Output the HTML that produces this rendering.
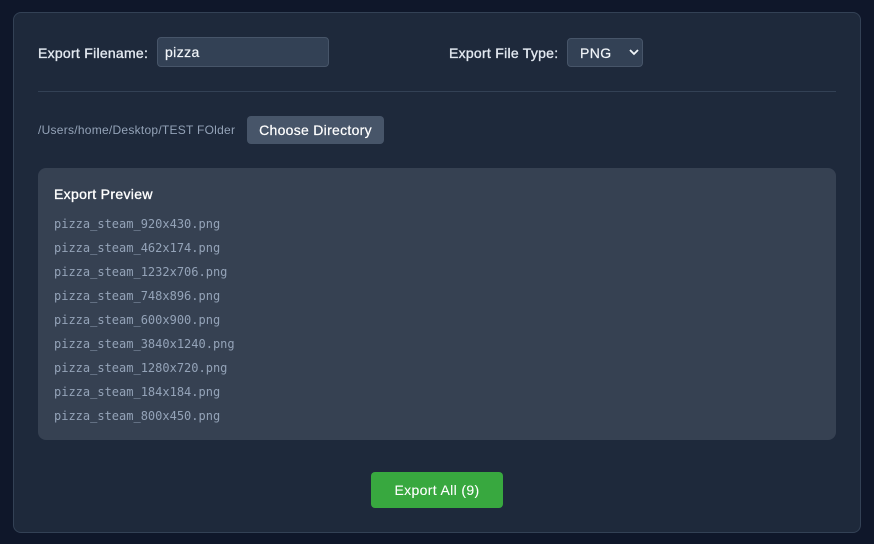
<!DOCTYPE html>
<html lang="en">
<head>
<meta charset="utf-8">
<title>Export</title>
<style>
html,body{margin:0;padding:0;width:874px;height:544px;overflow:hidden;background:#0f172a;}
body{position:relative;font-family:"Liberation Sans",sans-serif;}
.abs{position:absolute;box-sizing:border-box;white-space:nowrap;}
.card{left:13px;top:12px;width:848px;height:521px;background:#1e293b;border:1px solid #334155;border-radius:8px;}
.lbl{font-size:14px;line-height:18px;color:#e2e8f0;-webkit-text-stroke:.35px #e2e8f0;letter-spacing:.27px;}
.input{left:157px;top:37px;width:172px;height:30px;background:#334155;border:1px solid #475569;border-radius:4px;}
.select{left:567px;top:38px;width:76px;height:29px;background:#334155;border:1px solid #475569;border-radius:4px;}
.val{font-size:14px;line-height:18px;color:#f1f5f9;letter-spacing:.4px;-webkit-text-stroke:.2px #f1f5f9;}
.rule{left:38px;top:91px;width:798px;height:1px;background:#334155;}
.path{left:38px;top:122px;font-size:12px;line-height:16px;color:#94a3b8;letter-spacing:.26px;}
.btn{left:247px;top:116px;width:137px;height:28px;background:#475569;border-radius:4px;color:#fff;font-size:14px;line-height:28px;text-align:center;letter-spacing:.29px;-webkit-text-stroke:.2px #fff;}
.panel{left:38px;top:168px;width:798px;height:272px;background:#364152;border-radius:8px;}
.title{left:54px;top:186px;font-size:14px;line-height:16px;color:#fff;-webkit-text-stroke:.35px #fff;letter-spacing:.33px;}
.f{left:54px;font-family:"DejaVu Sans Mono",monospace;font-size:12px;line-height:16px;color:#94a3b8;}
.go{left:371px;top:472px;width:132px;height:36px;background:#38a83f;border-radius:4px;color:#fff;font-size:14px;line-height:36px;text-align:center;letter-spacing:.35px;-webkit-text-stroke:.1px #fff;}
</style>
</head>
<body>
<div class="abs card"></div>
<div class="abs lbl" style="left:38px;top:44px;">Export Filename:</div>
<div class="abs input"></div>
<div class="abs val" style="left:165px;top:43px;">pizza</div>
<div class="abs lbl" style="left:449px;top:44px;">Export File Type:</div>
<div class="abs select"></div>
<div class="abs val" style="left:580px;top:44px;">PNG</div>
<svg class="abs" style="left:629px;top:48px;" width="10" height="8" viewBox="0 0 10 8"><path d="M1 2l4 4 4-4" fill="none" stroke="#f1f5f9" stroke-width="1.8"/></svg>
<div class="abs rule"></div>
<div class="abs path">/Users/home/Desktop/TEST FOlder</div>
<div class="abs btn">Choose Directory</div>
<div class="abs panel"></div>
<div class="abs title">Export Preview</div>
<div class="abs f" style="top:216px;">pizza_steam_920x430.png</div>
<div class="abs f" style="top:240px;">pizza_steam_462x174.png</div>
<div class="abs f" style="top:264px;">pizza_steam_1232x706.png</div>
<div class="abs f" style="top:288px;">pizza_steam_748x896.png</div>
<div class="abs f" style="top:312px;">pizza_steam_600x900.png</div>
<div class="abs f" style="top:336px;">pizza_steam_3840x1240.png</div>
<div class="abs f" style="top:360px;">pizza_steam_1280x720.png</div>
<div class="abs f" style="top:384px;">pizza_steam_184x184.png</div>
<div class="abs f" style="top:408px;">pizza_steam_800x450.png</div>
<div class="abs go">Export All (9)</div>
</body>
</html>
